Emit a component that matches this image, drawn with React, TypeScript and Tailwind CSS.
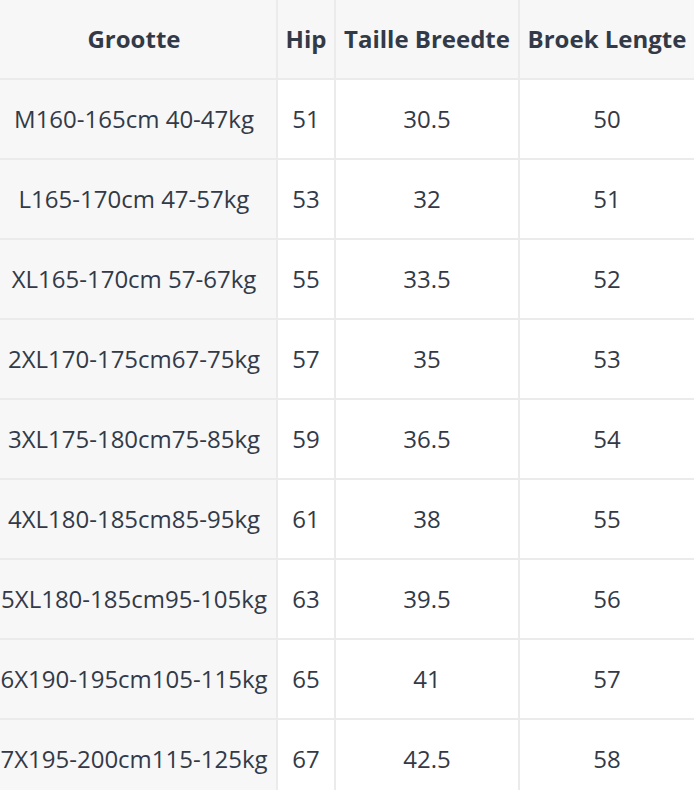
const rows = [
  ['M160-165cm 40-47kg', '51', '30.5', '50'],
  ['L165-170cm 47-57kg', '53', '32', '51'],
  ['XL165-170cm 57-67kg', '55', '33.5', '52'],
  ['2XL170-175cm67-75kg', '57', '35', '53'],
  ['3XL175-180cm75-85kg', '59', '36.5', '54'],
  ['4XL180-185cm85-95kg', '61', '38', '55'],
  ['5XL180-185cm95-105kg', '63', '39.5', '56'],
  ['6X190-195cm105-115kg', '65', '41', '57'],
  ['7X195-200cm115-125kg', '67', '42.5', '58'],
]

const cell = 'h-[80px] border-r-2 border-b-2 border-[#ebebeb] text-center align-middle whitespace-nowrap p-0'

export default function App() {
  return (
    <div className="w-[694px] h-[790px] overflow-hidden bg-white" style={{ fontFamily: '"Open Sans", sans-serif' }}>
      <table className="table-fixed border-separate border-spacing-0 ml-[-8px] w-[704px] text-[24px] text-[#333a47]">
        <colgroup>
          <col className="w-[286px]" />
          <col className="w-[58px]" />
          <col className="w-[184px]" />
          <col className="w-[176px]" />
        </colgroup>
        <thead>
          <tr className="bg-[#f7f7f7] font-bold">
            <th className={cell}>Grootte</th>
            <th className={cell}>Hip</th>
            <th className={cell}>Taille Breedte</th>
            <th className={cell}>Broek Lengte</th>
          </tr>
        </thead>
        <tbody>
          {rows.map((r) => (
            <tr key={r[0]}>
              <td className={`${cell} bg-[#f7f7f7]`}>{r[0]}</td>
              <td className={`${cell} bg-white`}>{r[1]}</td>
              <td className={`${cell} bg-white`}>{r[2]}</td>
              <td className={`${cell} bg-white`}>{r[3]}</td>
            </tr>
          ))}
        </tbody>
      </table>
    </div>
  )
}
